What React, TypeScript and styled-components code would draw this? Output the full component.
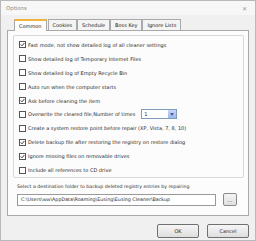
import React, { useState } from 'react';
import styled, { createGlobalStyle } from 'styled-components';

const GlobalStyle = createGlobalStyle`
  html, body {
    margin: 0;
    padding: 0;
    background: #ffffff;
  }
  * {
    box-sizing: border-box;
  }
`;

const Window = styled.div`
  width: 256px;
  height: 241px;
  background: #f0f0f0;
  border: 1px solid #b9b9b9;
  display: flex;
  flex-direction: column;
  font-family: Tahoma, "DejaVu Sans", "Liberation Sans", sans-serif;
  font-size: 5px;
  color: #2a2a2a;
  overflow: hidden;
`;

const TitleBar = styled.div`
  height: 14px;
  flex: none;
  display: flex;
  align-items: center;
  justify-content: space-between;
  padding: 0 8px 0 5px;
  background: #f7f7f7;
  color: #8a8a8a;
  font-size: 5.4px;
`;

const Close = styled.span`
  color: #9a9a9a;
  font-size: 6px;
`;

const Body = styled.div`
  flex: 1;
  display: flex;
  flex-direction: column;
  padding: 3px 6px 0 6px;
`;

const TabStrip = styled.div`
  display: flex;
  height: 12px;
  padding-left: 7px;
  align-items: flex-end;
`;

const Tab = styled.div<{ $active?: boolean }>`
  height: ${p => (p.$active ? '12px' : '11px')};
  display: flex;
  align-items: center;
  padding: 0 4px;
  margin-right: ${p => (p.$active ? '1px' : '0')};
  border: 1px solid #a9a9a9;
  border-bottom: none;
  border-top: ${p => (p.$active ? '2px solid #f0b43c' : '1px solid #a9a9a9')};
  background: ${p => (p.$active ? '#fcfcfc' : '#f4f4f4')};
  position: relative;
  top: ${p => (p.$active ? '1px' : '0')};
  color: #222;
`;

const Panel = styled.div`
  height: 186px;
  background: #fcfcfc;
  border: 1px solid #a9a9a9;
  padding: 4px 4px 0 5px;
  display: flex;
  flex-direction: column;
`;

const Group = styled.div`
  height: 143px;
  border: 1px solid #d8d8d8;
  border-radius: 2px;
  padding: 2px 0 0 5px;
  display: flex;
  flex-direction: column;
`;

const Row = styled.label`
  height: 14px;
  display: flex;
  align-items: center;
  white-space: nowrap;
  gap: 2px;
`;

const Box = styled.span`
  width: 7px;
  height: 7px;
  flex: none;
  border: 1px solid #555;
  background: #fff;
  display: flex;
  align-items: center;
  justify-content: center;
`;

const Combo = styled.div`
  width: 36px;
  height: 10px;
  margin-left: 4px;
  border: 1px solid #7f9db9;
  background: #fff;
  display: flex;
  align-items: stretch;
`;

const ComboText = styled.span`
  flex: 1;
  padding-left: 2px;
  display: flex;
  align-items: center;
`;

const ComboButton = styled.span`
  width: 8px;
  background: linear-gradient(#c6d6fb, #9fb7f0);
  display: flex;
  align-items: center;
  justify-content: center;
`;

const DestLabel = styled.div`
  margin-top: 4px;
  height: 8px;
  padding-left: 4px;
  display: flex;
  align-items: center;
  font-size: 4.7px;
`;

const PathRow = styled.div`
  display: flex;
  align-items: center;
  margin-top: 3px;
  padding-left: 4px;
  gap: 7px;
`;

const PathBox = styled.div`
  width: 199px;
  height: 12px;
  border: 1px solid #9a9a9a;
  background: #fff;
  padding-left: 3px;
  display: flex;
  align-items: center;
  white-space: nowrap;
  overflow: hidden;
  font-size: 4.8px;
`;

const SmallButton = styled.div`
  width: 14px;
  height: 13px;
  border: 1px solid #8a8a8a;
  border-radius: 2px;
  background: linear-gradient(#f4f4f4, #e0e0e0);
  display: flex;
  align-items: center;
  justify-content: center;
`;

const Footer = styled.div`
  display: flex;
  justify-content: flex-end;
  gap: 8px;
  padding: 8px 0 0 0;
`;

const Button = styled.div`
  width: 42px;
  height: 14px;
  border: 1px solid #707070;
  border-radius: 2px;
  background: linear-gradient(#f6f6f6, #dedede);
  display: flex;
  align-items: center;
  justify-content: center;
`;

const Check = () => (
  <svg width="5" height="5" viewBox="0 0 5 5">
    <path d="M0.6 2.4 L2 3.8 L4.4 1" stroke="#222" strokeWidth="0.9" fill="none" />
  </svg>
);

const options: { label: string; checked: boolean; combo?: boolean }[] = [
  { label: 'Fast mode, not show detailed log of all cleaner settings', checked: true },
  { label: 'Show detailed log of Temporary Internet Files', checked: false },
  { label: 'Show detailed log of Empty Recycle Bin', checked: false },
  { label: 'Auto run when the computer starts', checked: false },
  { label: 'Ask before cleaning the item', checked: true },
  { label: 'Overwrite the cleared file,Number of times', checked: false, combo: true },
  { label: 'Create a system restore point before repair (XP, Vista, 7, 8, 10)', checked: false },
  { label: 'Delete backup file after restoring the registry on restore dialog', checked: true },
  { label: 'Ignore missing files on removable drives', checked: true },
  { label: 'Include all references to CD drive', checked: false },
];

const tabs = ['Common', 'Cookies', 'Schedule', 'Boss Key', 'Ignore Lists'];

const App: React.FC = () => {
  const [active] = useState('Common');

  return (
    <>
      <GlobalStyle />
      <Window>
        <TitleBar>
          <span>Options</span>
          <Close>✕</Close>
        </TitleBar>
        <Body>
          <TabStrip>
            {tabs.map(t => (
              <Tab key={t} $active={t === active}>{t}</Tab>
            ))}
          </TabStrip>
          <Panel>
            <Group>
              {options.map(o => (
                <Row key={o.label}>
                  <Box>{o.checked && <Check />}</Box>
                  {o.label}
                  {o.combo && (
                    <Combo>
                      <ComboText>1</ComboText>
                      <ComboButton>
                        <svg width="4" height="3" viewBox="0 0 4 3">
                          <path d="M0 0 L4 0 L2 3 Z" fill="#4d6185" />
                        </svg>
                      </ComboButton>
                    </Combo>
                  )}
                </Row>
              ))}
            </Group>
            <DestLabel>Select a destination folder to backup deleted registry entries by repairing</DestLabel>
            <PathRow>
              <PathBox>C:\Users\ww\AppData\Roaming\Eusing\Eusing Cleaner\Backup</PathBox>
              <SmallButton>...</SmallButton>
            </PathRow>
          </Panel>
          <Footer>
            <Button>OK</Button>
            <Button>Cancel</Button>
          </Footer>
        </Body>
      </Window>
    </>
  );
};

export default App;
